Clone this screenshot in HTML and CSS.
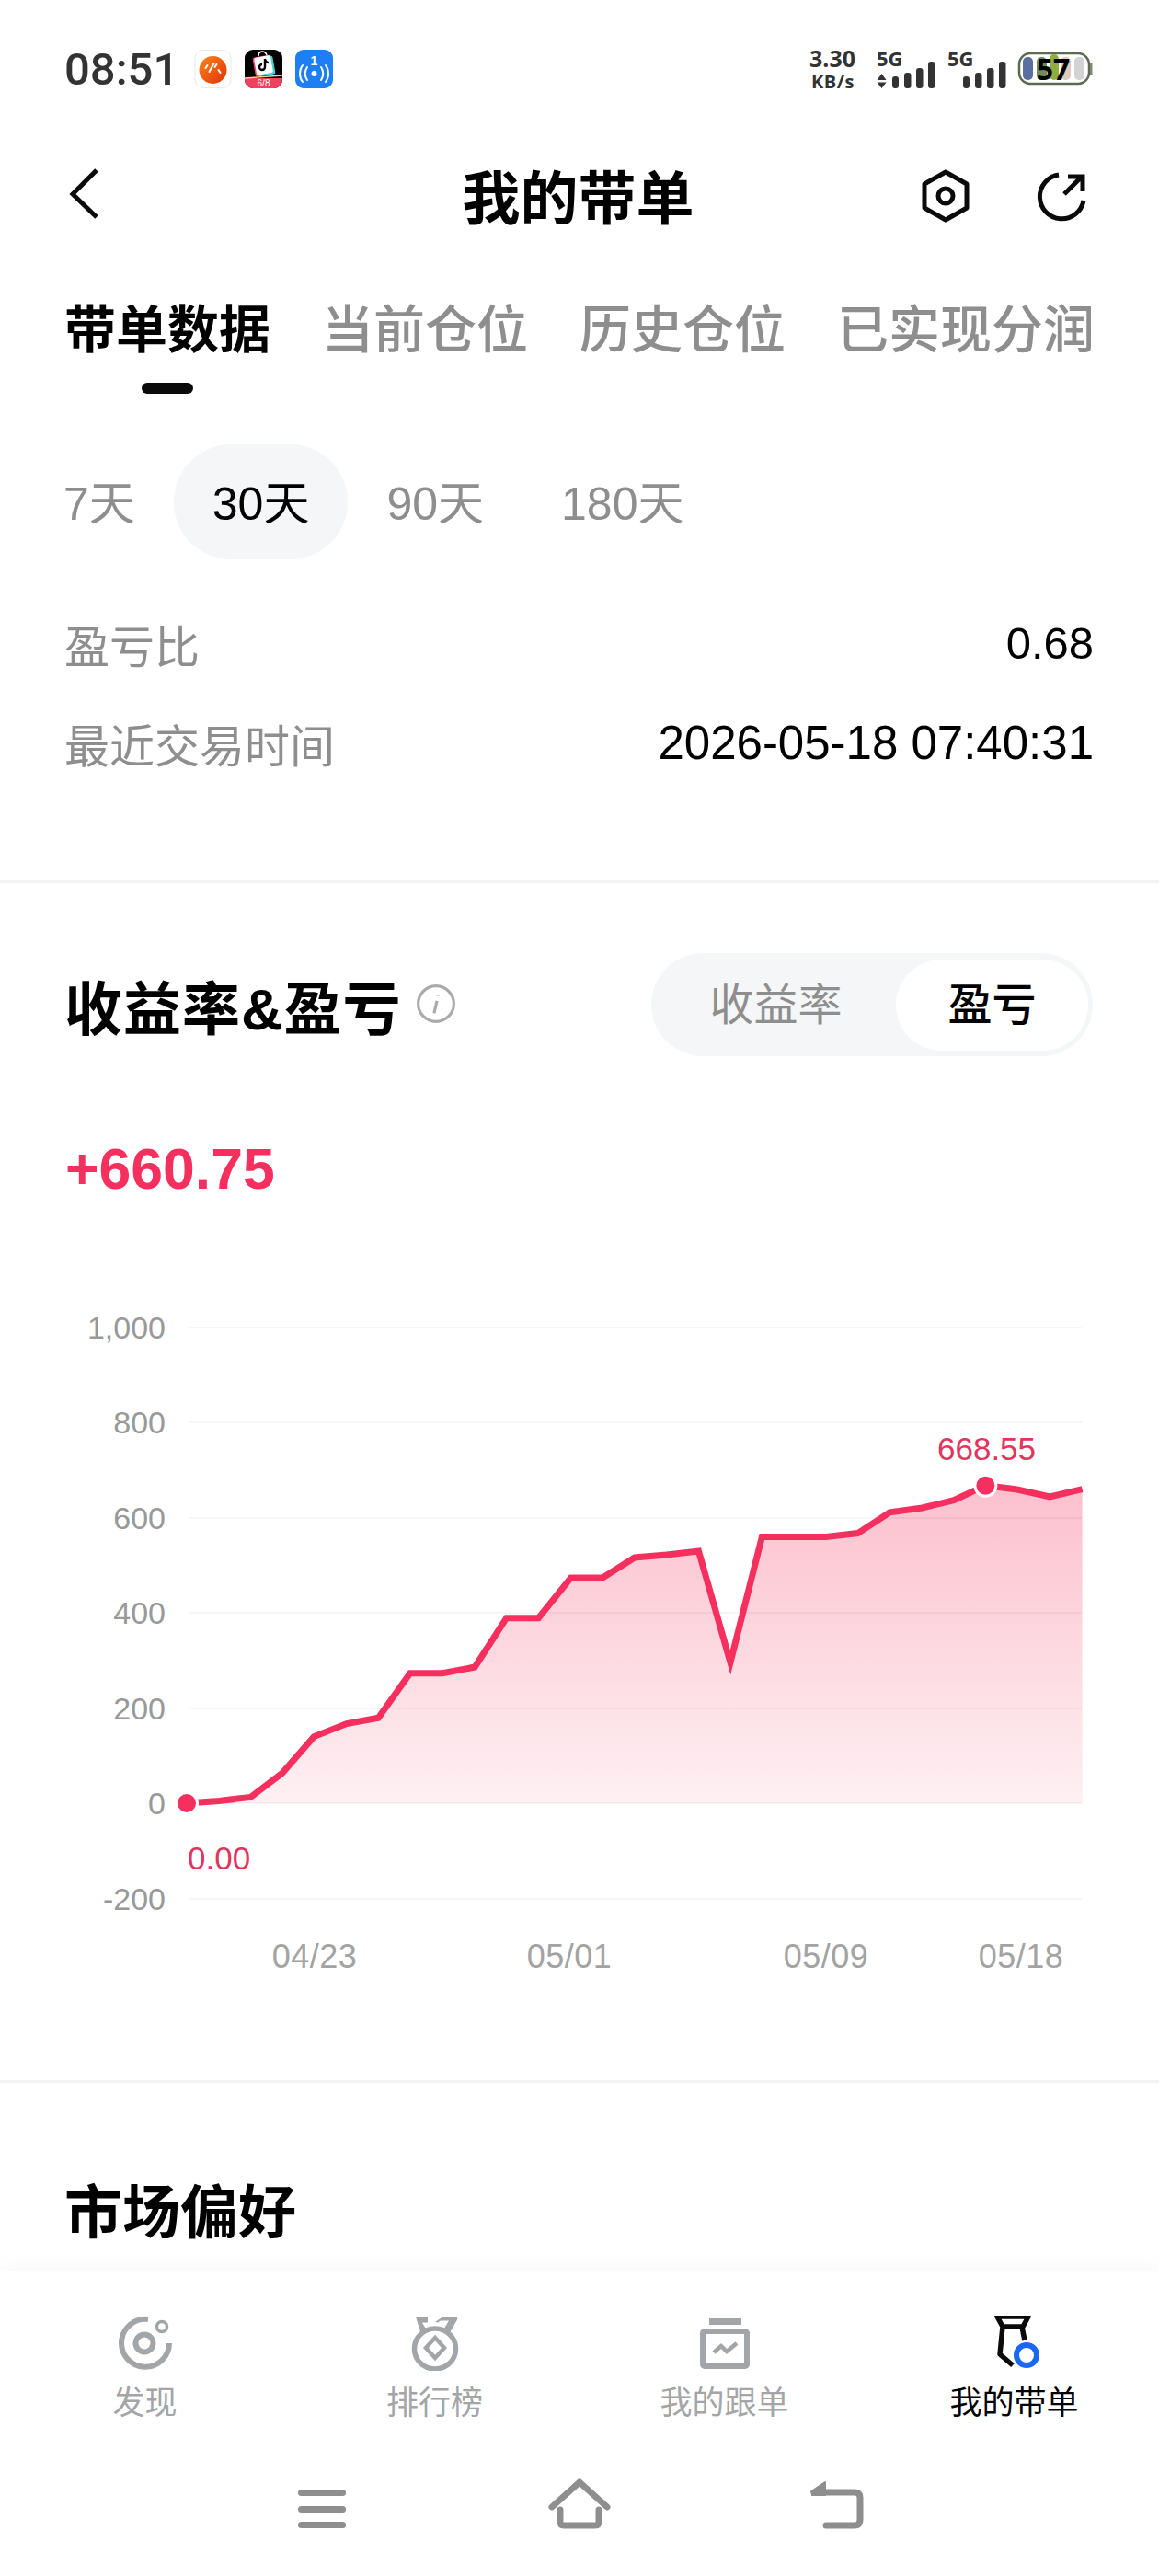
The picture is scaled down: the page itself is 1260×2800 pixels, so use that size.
FILE: index.html
```html
<!DOCTYPE html>
<html lang="zh-CN">
<head>
  <meta charset="UTF-8" />
  <meta name="viewport" content="width=device-width, initial-scale=1.0"/>
  <title>我的带单</title>
  <link rel="stylesheet" href="styles.css">
</head>
<body>
  <div class="page">
    <div class="main">
      <div class="statusbar">
        <span class="time">08:51</span>
        <div class="notices">
          <svg class="notice" viewBox="0 0 40 42">
            <defs>
              <linearGradient id="orange" x1="0" y1="0" x2="1" y2="1">
                <stop offset="0" stop-color="#f88a1e"/>
                <stop offset="1" stop-color="#e42f04"/>
              </linearGradient>
            </defs>
            <rect x="0.5" y="0.5" width="39" height="41" rx="9" fill="#fff" stroke="#e9e9e9"/>
            <ellipse cx="20" cy="22" rx="15" ry="15" fill="url(#orange)"/>
            <path d="M12 20l2-3M16 24l5-9M22 19l2-3M26 22l2 3" stroke="#fff" stroke-width="2" stroke-linecap="round" fill="none"/>
          </svg>
          <svg class="notice" viewBox="0 0 41 42">
            <rect width="41" height="42" rx="9" fill="#000"/>
            <path d="M0 31h41v2a9 9 0 0 1-9 9H9a9 9 0 0 1-9-9z" fill="#ef4160"/>
            <path d="M0 31L41 28" stroke="#e9d98a" stroke-width="1.5"/>
            <rect x="10" y="7" width="20" height="21" rx="2" fill="#f5477b" transform="rotate(-10 20 17)"/>
            <rect x="13" y="8" width="19" height="20" rx="2" fill="#3fd8d4" transform="rotate(-10 22 18)"/>
            <rect x="11.5" y="7.5" width="18" height="19" rx="2" fill="#fff" transform="rotate(-10 20 17)"/>
            <path d="M15 7c0-6 7-7 9-1" stroke="#fff" stroke-width="1.5" fill="none"/>
            <path d="M22 10v9a3 3 0 1 1-3-3M22 10c0 2 2 4 4 4" stroke="#000" stroke-width="2.4" fill="none"/>
            <text x="20.5" y="40" class="notice-text">6/8</text>
          </svg>
          <svg class="notice" viewBox="0 0 41 42">
            <rect width="41" height="42" rx="9" fill="#1d7ff3"/>
            <text x="20.5" y="17" class="notice-num">1</text>
            <circle cx="20.5" cy="26" r="3" fill="#fff"/>
            <path d="M13 19c-3 4-3 10 0 14M28 19c3 4 3 10 0 14M8 17c-4 5-4 13 0 18M33 17c4 5 4 13 0 18" stroke="#fff" stroke-width="2" fill="none" stroke-linecap="round"/>
          </svg>
        </div>
        <svg class="status-right" viewBox="0 0 320 60">
          <text x="11" y="28" class="speed-a">3.30</text>
          <text x="13" y="51" class="speed-b">KB/s</text>
          <text x="84" y="27" class="net">5G</text>
          <path d="M89.500 35l5 7h-10zM89.500 51l5-6.500h-10z" fill="#333"/>
          <rect x="101" y="38" width="7" height="13" rx="3" fill="#333"/>
          <rect x="114" y="34" width="7.500" height="17" rx="3" fill="#333"/>
          <rect x="127" y="29" width="7.500" height="22" rx="3" fill="#333"/>
          <rect x="140" y="22" width="7.500" height="29" rx="3" fill="#333"/>
          <text x="161" y="27" class="net">5G</text>
          <rect x="178" y="38" width="7" height="13" rx="3" fill="#333"/>
          <rect x="191" y="34" width="7.500" height="17" rx="3" fill="#333"/>
          <rect x="204" y="29" width="7.500" height="22" rx="3" fill="#333"/>
          <rect x="217" y="22" width="7.500" height="29" rx="3" fill="#333"/>
          <rect x="239" y="13" width="76" height="33" rx="12" fill="#fff" stroke="#5d6a52" stroke-width="2.500"/>
          <rect x="316" y="23" width="2.500" height="13" fill="#7f8a70"/>
          <rect x="243" y="17" width="11" height="25" rx="5" fill="#5a6f9e"/>
          <rect x="258" y="17" width="11" height="25" rx="5" fill="#6f8c5e"/>
          <rect x="272" y="14" width="10" height="28" rx="5" fill="#90ad42"/>
          <rect x="284" y="17" width="11" height="25" rx="5" fill="#e3c9b8"/>
          <rect x="299" y="17" width="11" height="25" rx="5" fill="#d3d3d3"/>
          <text x="276" y="42" class="battery">57</text>
        </svg>
      </div>

      <div class="navbar">
        <svg class="nav-back" viewBox="0 0 40 60"><path d="M32 5L6 31l26 25" fill="none" stroke="#0a0a0a" stroke-width="5"/></svg>
        <h1>我的带单</h1>
        <div class="nav-actions">
          <svg class="nav-icon" viewBox="0 0 60 60">
            <path d="M30 4L53 17V43L30 56L7 43V17z" fill="none" stroke="#0a0a0a" stroke-width="5" stroke-linejoin="round"/>
            <circle cx="30" cy="30" r="8" fill="none" stroke="#0a0a0a" stroke-width="5"/>
          </svg>
          <svg class="nav-icon" viewBox="0 0 60 60">
            <path d="M27 7A24 24 0 1 0 54 35" fill="none" stroke="#0a0a0a" stroke-width="5"/>
            <path d="M33 28L52 9M37 9H53V25" fill="none" stroke="#0a0a0a" stroke-width="5"/>
          </svg>
        </div>
      </div>

      <div class="tabs">
        <div class="tab active">带单数据</div>
        <div class="tab">当前仓位</div>
        <div class="tab">历史仓位</div>
        <div class="tab">已实现分润</div>
      </div>

      <div class="periods">
        <div class="period">7天</div>
        <div class="period active">30天</div>
        <div class="period">90天</div>
        <div class="period">180天</div>
      </div>

      <div class="stats">
        <div class="stat"><span class="stat-label">盈亏比</span><span class="stat-value">0.68</span></div>
        <div class="stat"><span class="stat-label">最近交易时间</span><span class="stat-value long">2026-05-18 07:40:31</span></div>
      </div>

      <div class="section">
        <div class="section-head">
          <div class="section-title">
            <h2>收益率&amp;盈亏</h2>
            <svg class="info" viewBox="0 0 42 42">
              <circle cx="21" cy="21" r="18.5" fill="none" stroke="#aaa" stroke-width="3"/>
              <path d="M23 12v1M22 18l-3 13" stroke="#aaa" stroke-width="3" fill="none"/>
            </svg>
          </div>
          <div class="toggle">
            <div class="toggle-item">收益率</div>
            <div class="toggle-item active">盈亏</div>
          </div>
        </div>
        <div class="profit">+660.75</div>

        <svg class="chart" viewBox="0 0 1260 800">
          <defs>
            <linearGradient id="area" x1="0" y1="214" x2="0" y2="560" gradientUnits="userSpaceOnUse">
              <stop offset="0" stop-color="#fcc0cd"/>
              <stop offset="1" stop-color="#fef0f3"/>
            </linearGradient>
          </defs>
          <polygon class="area" points="202.7,560 238,557.4 272.4,553.5 306.8,527.4 341.3,487.6 376.9,473.6 411.3,467.3 445.8,418.8 481,418.8 516.2,412 550.6,358.7 585.4,358.7 620.6,315 655.1,315 690,293 724.7,290 759.5,286 794,407 828.4,270.5 862.8,270.5 898,270.5 932.5,266.6 967.3,243.8 1002.5,239 1037,230.7 1071.4,214.7 1105.8,219 1141.4,226.9 1176.6,218.6 1176.6,560"/>
          <g class="grid">
            <line x1="205" y1="43" x2="1176" y2="43"/>
            <line x1="205" y1="146" x2="1176" y2="146"/>
            <line x1="205" y1="250" x2="1176" y2="250"/>
            <line x1="205" y1="353" x2="1176" y2="353"/>
            <line x1="205" y1="457" x2="1176" y2="457"/>
            <line x1="205" y1="560" x2="1176" y2="560"/>
            <line x1="205" y1="664" x2="1176" y2="664"/>
          </g>
          <g class="y-axis">
            <text x="180" y="55">1,000</text>
            <text x="180" y="158">800</text>
            <text x="180" y="262">600</text>
            <text x="180" y="365">400</text>
            <text x="180" y="469">200</text>
            <text x="180" y="572">0</text>
            <text x="180" y="676">-200</text>
          </g>
          <polyline class="line" points="202.7,560 238,557.4 272.4,553.5 306.8,527.4 341.3,487.6 376.9,473.6 411.3,467.3 445.8,418.8 481,418.8 516.2,412 550.6,358.7 585.4,358.7 620.6,315 655.1,315 690,293 724.7,290 759.5,286 794,407 828.4,270.5 862.8,270.5 898,270.5 932.5,266.6 967.3,243.8 1002.5,239 1037,230.7 1071.4,214.7 1105.8,219 1141.4,226.9 1176.6,218.6"/>
          <circle class="dot" cx="203" cy="560" r="11.5"/>
          <circle class="dot" cx="1071.4" cy="214.7" r="11.5"/>
          <text class="mark" x="204" y="632">0.00</text>
          <text class="mark" x="1019" y="187">668.55</text>
          <g class="x-axis">
            <text x="342" y="739">04/23</text>
            <text x="619" y="739">05/01</text>
            <text x="898" y="739">05/09</text>
            <text x="1110" y="739">05/18</text>
          </g>
        </svg>
      </div>

      <h2 class="market">市场偏好</h2>
    </div>

    <div class="footer">
      <div class="footer-tabs">
        <div class="footer-tab">
          <svg class="footer-icon" viewBox="0 0 60 60">
            <path d="M33 4A26 26 0 1 0 56 30" fill="none" stroke="#a3a6a8" stroke-width="6"/>
            <circle cx="29" cy="30" r="9.5" fill="none" stroke="#a3a6a8" stroke-width="6"/>
            <circle cx="48" cy="12" r="5.5" fill="none" stroke="#a3a6a8" stroke-width="3.5"/>
          </svg>
          <span>发现</span>
        </div>
        <div class="footer-tab">
          <svg class="footer-icon" viewBox="0 0 60 60">
            <ellipse cx="30" cy="36" rx="22.5" ry="22" fill="none" stroke="#a3a6a8" stroke-width="5.5"/>
            <path d="M30 24l10 11-10 11-10-11z" fill="none" stroke="#a3a6a8" stroke-width="4.5"/>
            <path d="M9 1.500h13v6h-6l4 7-6 3zM30 7l8-5.500h14q3 0 2 3l-8 14-7-3 6-10h-9l-3 2z" fill="#a3a6a8"/>
          </svg>
          <span>排行榜</span>
        </div>
        <div class="footer-tab">
          <svg class="footer-icon" viewBox="0 0 60 60">
            <rect x="13" y="3" width="35" height="7" fill="#a3a6a8"/>
            <rect x="6" y="17" width="48" height="38" rx="2" fill="none" stroke="#a3a6a8" stroke-width="6"/>
            <path d="M18 40l8-7 6 6 11-9" fill="none" stroke="#a3a6a8" stroke-width="4.5"/>
          </svg>
          <span>我的跟单</span>
        </div>
        <div class="footer-tab active">
          <svg class="footer-icon" viewBox="0 0 60 60">
            <path d="M11 1H45L39 12H17zM17 12L14 42L28 54M38 12L41 27" fill="none" stroke="#0a0a0a" stroke-width="5.500" stroke-linejoin="round"/>
            <ellipse cx="43" cy="43" rx="11" ry="11" fill="#fff" stroke="#1a66f5" stroke-width="6"/>
          </svg>
          <span>我的带单</span>
        </div>
      </div>
      <div class="sysnav">
        <svg class="sys-icon" viewBox="0 0 70 60">
          <rect x="9" y="16" width="52" height="7" rx="3.500"/>
          <rect x="9" y="34" width="52" height="7" rx="3.500"/>
          <rect x="9" y="51" width="52" height="7" rx="3.500"/>
        </svg>
        <svg class="sys-icon" viewBox="0 0 70 60">
          <path class="sys-stroke" d="M5 35L35 8L65 35M14 38V51Q14 55 18 55H52Q56 55 56 51V38"/>
        </svg>
        <svg class="sys-icon" viewBox="0 0 70 60">
          <path class="sys-stroke" d="M12 19H54Q60 19 60 25V49Q60 55 54 55H23"/>
          <path d="M7 18L22 8V22H8z" fill="#8e8e8e" stroke="#8e8e8e" stroke-width="2" stroke-linejoin="round"/>
        </svg>
      </div>
    </div>
  </div>
</body>
</html>
```

FILE: styles.css
```css
* {
  box-sizing: border-box;
}
body {
  font-family: 'Liberation Sans', 'Noto Sans CJK SC', sans-serif;
  background: white;
  color: #000;
  margin: 0;
}
h1, h2 {
  margin: 0;
}
.page {
  width: 1260px;
  height: 2800px;
  display: flex;
  flex-direction: column;
  overflow: hidden;
}
.main {
  flex: 1;
  min-height: 0;
  overflow: hidden;
}

/* status bar */
.statusbar {
  height: 150px;
  padding-left: 70px;
  display: flex;
  align-items: center;
}
.time {
  font-family: Roboto, sans-serif;
  font-weight: 500;
  font-size: 49px;
  color: #333;
  width: 141px;
}
.notices {
  display: flex;
  gap: 14px;
}
.notice {
  width: 41px;
  height: 42px;
  display: block;
}
.notice-text {
  font-family: 'Liberation Sans', sans-serif;
  font-size: 10px;
  fill: #fff;
  text-anchor: middle;
}
.notice-num {
  font-family: 'Liberation Sans', sans-serif;
  font-weight: bold;
  font-size: 14px;
  fill: #fff;
  text-anchor: middle;
}
.status-right {
  width: 320px;
  height: 60px;
  margin-left: auto;
  margin-right: 71px;
  display: block;
  overflow: visible;
}
.speed-a, .speed-b, .net {
  font-family: 'Open Sans', sans-serif;
  font-weight: 700;
  fill: #333;
}
.speed-a {
  font-size: 25px;
}
.speed-b {
  font-size: 20px;
  letter-spacing: 0.5px;
}
.net {
  font-size: 22px;
}
.battery {
  font-family: 'Open Sans', sans-serif;
  font-weight: 700;
  font-size: 32px;
  fill: #000;
  text-anchor: middle;
}

/* nav */
.navbar {
  height: 125px;
  padding: 0 72px;
  display: flex;
  align-items: center;
  justify-content: space-between;
}
.nav-back {
  width: 40px;
  height: 60px;
  display: block;
  margin-left: 1px;
  margin-top: -6px;
}
.navbar h1 {
  font-size: 63px;
  font-weight: 700;
  line-height: 80px;
  margin-left: 146px;
  padding-top: 6px;
}
.nav-actions {
  display: flex;
  gap: 66px;
  margin-right: 4px;
}
.nav-icon {
  width: 60px;
  height: 60px;
  display: block;
}

/* tabs */
.tabs {
  padding: 44px 70px 0;
  height: 208px;
  display: flex;
  justify-content: space-between;
}
.tab {
  font-size: 56px;
  font-weight: 500;
  line-height: 80px;
  color: #8e8e8e;
  display: flex;
  flex-direction: column;
  align-items: center;
}
.tab.active {
  color: #000;
  font-weight: 700;
}
.tab.active::after {
  content: '';
  width: 56px;
  height: 12px;
  border-radius: 6px;
  background: #0a0a0a;
  margin-top: 17px;
}

/* period picker */
.periods {
  padding-left: 27px;
  display: flex;
}
.period {
  height: 125px;
  padding: 0 42px;
  border-radius: 62px;
  font-size: 50px;
  line-height: 131px;
  color: #8e8e8e;
}
.period.active {
  background: #f4f6f7;
  color: #000;
}

/* stats */
.stats {
  padding: 37px 71px 96px 70px;
  border-bottom: 3px solid #f2f2f2;
}
.stat {
  height: 108px;
  display: flex;
  align-items: center;
  justify-content: space-between;
}
.stat-label {
  font-size: 49px;
  color: #8e8e8e;
}
.stat-value {
  font-size: 49px;
}
.stat-value.long {
  font-size: 51px;
}

/* chart section */
.section {
  padding-top: 76px;
  padding-bottom: 61px;
  border-bottom: 3px solid #f2f2f2;
}
.section-head {
  padding: 0 72px 0 70px;
  display: flex;
  align-items: center;
  justify-content: space-between;
}
.section-title {
  display: flex;
  align-items: center;
  gap: 15px;
}
.section-title h2 {
  font-size: 63px;
  letter-spacing: 1px;
  line-height: 80px;
  padding-top: 10px;
}
.info {
  width: 44px;
  height: 44px;
  display: block;
  margin-top: -2px;
}
.toggle {
  width: 480px;
  height: 112px;
  padding: 7px 5px 6px;
  border-radius: 56px;
  background: #f4f6f7;
  display: flex;
}
.toggle-item {
  flex: 1;
  font-size: 48px;
  line-height: 99px;
  text-align: center;
  color: #8e8e8e;
}
.toggle-item.active {
  flex: none;
  width: 209px;
  border-radius: 50px;
  background: white;
  color: #000;
  font-weight: 500;
}
.profit {
  margin: 82px 71px 0;
  font-size: 62.5px;
  font-weight: 700;
  line-height: 80px;
  color: #f5305f;
}
.chart {
  width: 1260px;
  height: 800px;
  margin-top: 90px;
  display: block;
}
.grid line {
  stroke: rgba(0,0,0,0.04);
  stroke-width: 2;
}
.y-axis text {
  font-size: 34px;
  fill: #999;
  text-anchor: end;
}
.x-axis text {
  font-size: 36px;
  letter-spacing: 0.5px;
  fill: #a3a3a3;
  text-anchor: middle;
}
.area {
  fill: url(#area);
}
.line {
  fill: none;
  stroke: #f5305f;
  stroke-width: 7;
}
.dot {
  fill: #f5305f;
  stroke: white;
  stroke-width: 3;
}
.mark {
  font-size: 35px;
  fill: #e0355d;
}

.market {
  margin: 101px 70px 0;
  font-size: 63px;
  line-height: 80px;
}

/* bottom bar */
.footer {
  height: 332px;
  padding-top: 49px;
  box-shadow: 0 -8px 20px rgba(0,0,0,0.025);
  background: white;
}
.footer-tabs {
  display: grid;
  grid-template-columns: repeat(4, 1fr);
}
.footer-tab {
  display: flex;
  flex-direction: column;
  align-items: center;
  font-size: 35px;
  line-height: 40px;
  color: #a3a5a7;
}
.footer-tab.active {
  color: #000;
}
.footer-icon {
  width: 60px;
  height: 60px;
  display: block;
  margin-bottom: 15px;
}
.sysnav {
  margin-top: 58px;
  display: flex;
  justify-content: center;
  gap: 210px;
}
.sys-icon {
  width: 70px;
  height: 60px;
  display: block;
  fill: #8e8e8e;
}
.sys-stroke {
  fill: none;
  stroke: #8e8e8e;
  stroke-width: 7;
  stroke-linecap: round;
  stroke-linejoin: round;
}
```
